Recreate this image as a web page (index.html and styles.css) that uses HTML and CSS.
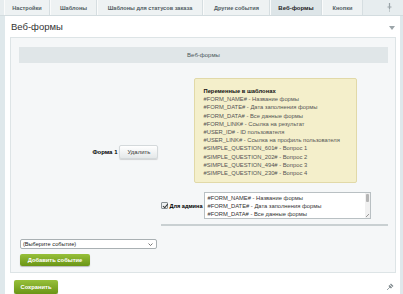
FILE: index.html
```html
<!DOCTYPE html>
<html lang="ru">

<head>
    <meta charset="UTF-8">
    <meta name="viewport" content="width=device-width, initial-scale=1.0">
    <title>Веб-формы</title>
    <link rel="stylesheet" href="styles.css">
</head>

<body>
    <div class="tabs">
        <div class="tab tab-settings">Настройки</div>
        <div class="tab tab-templates">Шаблоны</div>
        <div class="tab tab-statuses">Шаблоны для статусов заказа</div>
        <div class="tab tab-events">Другие события</div>
        <div class="tab tab-forms active">Веб-формы</div>
        <div class="tab tab-buttons">Кнопки</div>
        <div class="tabs-pin">
            <svg width="7" height="9" viewBox="0 0 7 9">
                <path d="M3.5 0 V6" stroke="#9aa4a8" stroke-width="1.2" />
                <path d="M1.5 4 H5.5" stroke="#9aa4a8" stroke-width="1" />
                <path d="M3.5 6 V9" stroke="#b8c0c3" stroke-width="0.8" />
            </svg>
        </div>
    </div>

    <div class="page">
        <div class="page-head">
            <div class="page-title">Веб-формы</div>
            <div class="collapse"></div>
        </div>

        <div class="panel">
            <div class="panel-head">Веб-формы</div>

            <div class="form-row">
                <div class="form-label">
                    <span class="form-name">Форма 1</span>
                    <div class="btn">Удалить</div>
                </div>
                <div class="form-field">
                    <div class="note">
                        <div class="note-title">Переменные в шаблонах</div>
                        <div>#FORM_NAME# - Название формы</div>
                        <div>#FORM_DATE# - Дата заполнения формы</div>
                        <div>#FORM_DATA# - Все данные формы</div>
                        <div>#FORM_LINK# - Ссылка на результат</div>
                        <div>#USER_ID# - ID пользователя</div>
                        <div>#USER_LINK# - Ссылка на профиль пользователя</div>
                        <div>#SIMPLE_QUESTION_601# - Вопрос 1</div>
                        <div>#SIMPLE_QUESTION_202# - Вопрос 2</div>
                        <div>#SIMPLE_QUESTION_494# - Вопрос 3</div>
                        <div>#SIMPLE_QUESTION_230# - Вопрос 4</div>
                    </div>
                    <div class="admin-row">
                        <label class="admin-check"><span class="check"></span>Для админа</label>
                        <div class="textarea">
                            <div class="textarea-text">#FORM_NAME# - Название формы<br>#FORM_DATE# - Дата заполнения формы<br>#FORM_DATA# - Все данные формы</div>
                            <div class="scroll"><div class="thumb"></div></div>
                            <div class="grip"></div>
                        </div>
                    </div>
                </div>
            </div>

            <div class="event-select">
                <span>(Выберите событие)</span>
                <svg width="5" height="3" viewBox="0 0 5 3">
                    <path d="M0.5 0.5 L2.5 2.5 L4.5 0.5" fill="none" stroke="#555" stroke-width="0.8" />
                </svg>
            </div>
            <div class="btn-green add-event">Добавить событие</div>
        </div>

        <div class="footer">
            <div class="btn-green save">Сохранить</div>
            <svg class="pin" width="8" height="8" viewBox="0 0 8 8">
                <path d="M1 7 L4 4" stroke="#9aa4a8" stroke-width="1" />
                <path d="M3 2.5 L5.5 5" stroke="#7d878b" stroke-width="1.6" />
                <path d="M4.5 1 L7 3.5" stroke="#7d878b" stroke-width="1.2" />
            </svg>
        </div>
    </div>
</body>

</html>
```

FILE: styles.css
```css
body {
    margin: 0;
    background-color: #dfe8eb;
    font-family: 'Liberation Sans', Arial, sans-serif;
    color: #000;
    font-size: 6px;
}

.tabs {
    display: flex;
    height: 16px;
    padding-left: 4px;
    background-color: #e7edef;
    border-bottom: 1px solid #d3dcdf;
    box-sizing: border-box;
}

.tab {
    display: flex;
    align-items: center;
    justify-content: center;
    box-sizing: border-box;
    background-color: #eef2f3;
    border-right: 1px solid #d6dee1;
    border-left: 1px solid #fafbfb;
    font-weight: bold;
    color: #515d63;
    font-size: 5.6px;
    white-space: nowrap;
}

.tab-settings { width: 46px; }
.tab-templates { width: 47px; }
.tab-statuses { width: 106px; }
.tab-events { width: 67px; }
.tab-forms { width: 52px; }
.tab-buttons { width: 41px; }

.tab.active {
    background-color: #dde5e8;
    color: #222;
    font-size: 6px;
}

.tabs-pin {
    margin-left: auto;
    padding: 3px 10px 0 0;
}

.page {
    margin-left: 5px;
    margin-right: 3px;
    min-height: 278px;
    background-color: #fff;
    padding: 0 0 0 5px;
}

.page-head {
    display: flex;
    align-items: center;
    justify-content: space-between;
    height: 21px;
    padding-right: 5px;
}

.page-title {
    font-size: 9.5px;
    color: #333;
    padding-left: 1px;
}

.collapse {
    width: 0;
    height: 0;
    border-left: 3.5px solid transparent;
    border-right: 3.5px solid transparent;
    border-top: 4px solid #9ca5a9;
    margin-top: 2px;
}

.panel {
    width: 386px;
    height: 236px;
    box-sizing: border-box;
    background-color: #f5f7f8;
    border: 1px solid #dde4e6;
    padding: 9px 7px 0 8px;
}

.panel-head {
    height: 16px;
    background-color: #e0e6e8;
    display: flex;
    align-items: center;
    justify-content: center;
    color: #4b5559;
    font-size: 6px;
}

.form-row {
    display: flex;
    margin-top: 15px;
}

.form-label {
    width: 141px;
    display: flex;
    align-items: center;
    justify-content: flex-end;
    gap: 2px;
}

.form-name {
    font-weight: bold;
}

.btn {
    width: 39px;
    height: 14px;
    box-sizing: border-box;
    display: flex;
    align-items: center;
    justify-content: center;
    background: linear-gradient(#ffffff, #e4e8e9);
    border: 1px solid #d4d9db;
    border-radius: 2px;
    box-shadow: 0 1px 1px rgba(0, 0, 0, 0.15);
    color: #333;
}

.form-field {
    margin-left: 3px;
    width: 229px;
    border-bottom: 2px solid #c9d0d2;
    padding-bottom: 5px;
}

.note {
    margin-left: 33px;
    width: 163px;
    height: 105px;
    box-sizing: border-box;
    background-color: #f4efcb;
    border: 1px solid #e1d9a8;
    border-radius: 2px;
    padding: 8px 8px;
    color: #555;
    font-size: 5.8px;
    line-height: 8.2px;
    white-space: nowrap;
}

.note-title {
    font-weight: bold;
    color: #111;
}

.admin-row {
    display: flex;
    align-items: center;
    margin-top: 9px;
}

.admin-check {
    width: 43px;
    display: flex;
    align-items: center;
    gap: 1px;
    font-weight: bold;
    font-size: 5.6px;
    white-space: nowrap;
}

.check {
    flex: none;
    width: 7px;
    height: 7px;
    box-sizing: border-box;
    border: 1px solid #8a9296;
    border-radius: 1px;
    background-color: #eef1f2;
    position: relative;
}

.check::after {
    content: "";
    position: absolute;
    left: 1.5px;
    top: 0;
    width: 2px;
    height: 3.5px;
    border: solid #333;
    border-width: 0 1px 1px 0;
    transform: rotate(40deg);
}

.textarea {
    width: 167px;
    height: 27px;
    box-sizing: border-box;
    background-color: #fff;
    border: 1px solid #b9c0c3;
    display: flex;
    overflow: hidden;
    position: relative;
}

.textarea-text {
    flex: 1;
    padding: 1px 2px;
    line-height: 8px;
    font-size: 5.8px;
    color: #333;
    white-space: nowrap;
}

.scroll {
    width: 5px;
    background-color: #f1f1f1;
    padding-top: 1px;
}

.thumb {
    width: 3px;
    height: 8px;
    margin: 0 auto;
    background-color: #b5b5b5;
    border-radius: 1px;
}

.grip {
    position: absolute;
    right: 1px;
    bottom: 1px;
    width: 3px;
    height: 3px;
    background: linear-gradient(135deg, transparent 45%, #999 50%, transparent 60%);
}

.event-select {
    margin: 13px 0 0 1px;
    width: 137px;
    height: 10px;
    box-sizing: border-box;
    border: 1px solid #a9b0b3;
    border-radius: 2px;
    background-color: #fff;
    display: flex;
    align-items: center;
    justify-content: space-between;
    padding: 0 3px 0 2px;
    color: #222;
    font-size: 5.6px;
}

.btn-green {
    display: flex;
    align-items: center;
    justify-content: center;
    background: linear-gradient(#97c03a, #6a9515);
    border-radius: 2px;
    box-shadow: 0 1px 1px rgba(0, 0, 0, 0.25);
    color: #fff;
    font-weight: bold;
    font-size: 5.8px;
}

.add-event {
    margin: 5px 0 0 1px;
    width: 70px;
    height: 12px;
}

.footer {
    display: flex;
    align-items: center;
    justify-content: space-between;
    padding: 7px 6px 0 4px;
}

.save {
    width: 44px;
    height: 14px;
}
```
